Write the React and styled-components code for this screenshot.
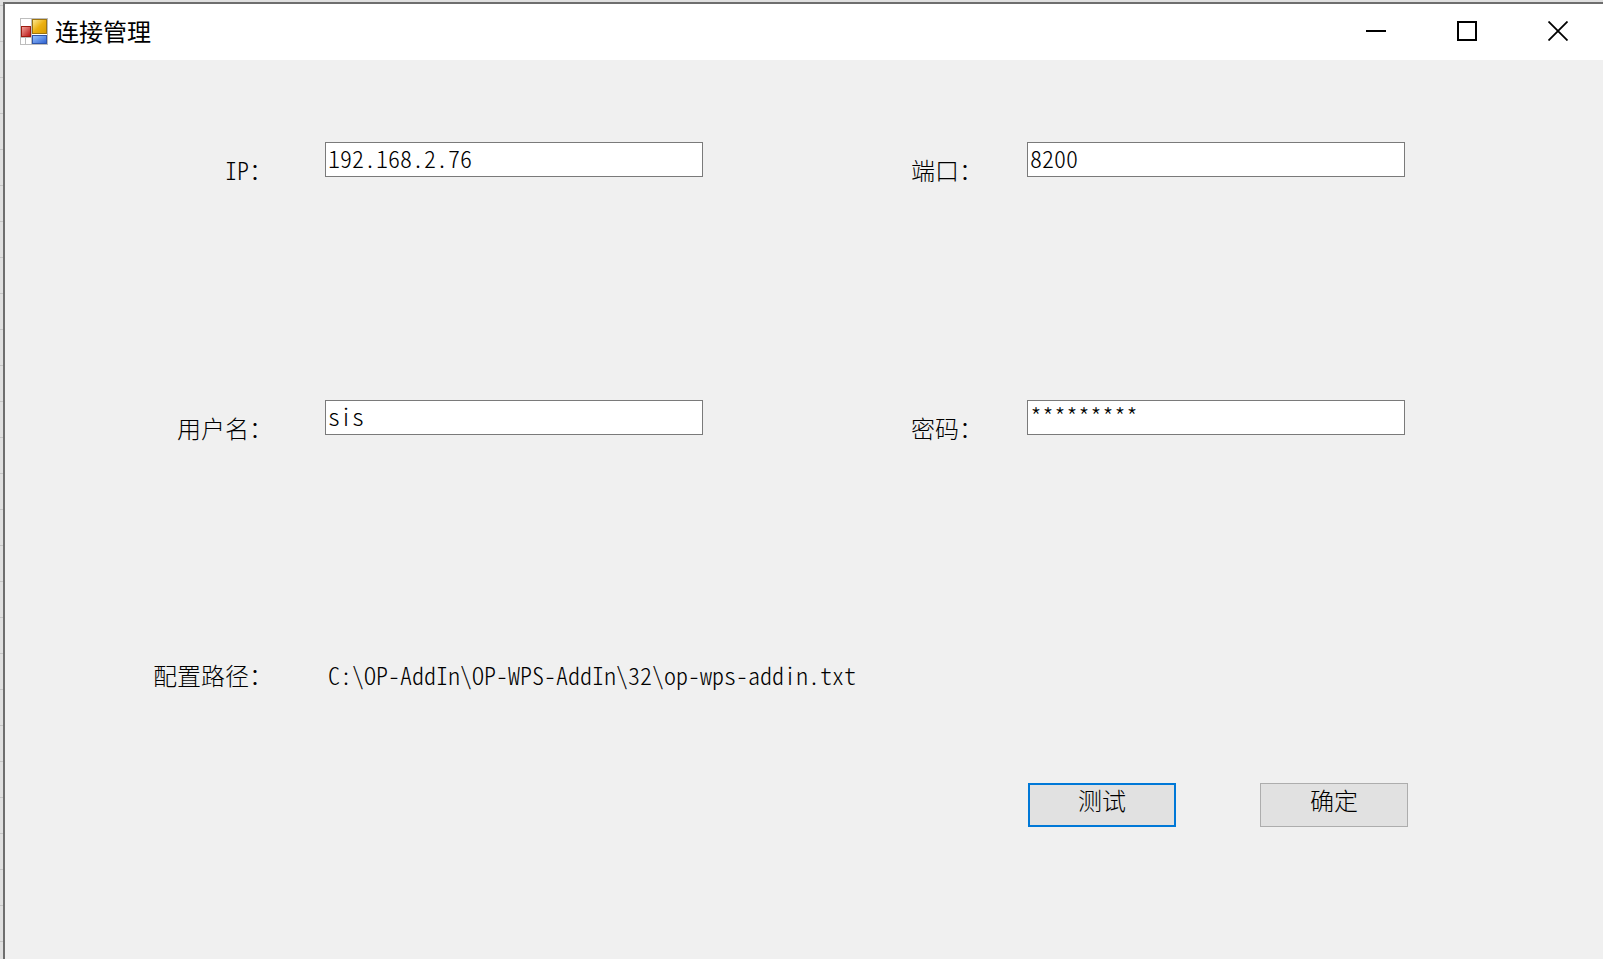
import React, { useState } from 'react';
import styled, { createGlobalStyle } from 'styled-components';

const GlobalStyle = createGlobalStyle`
  * {
    box-sizing: border-box;
  }

  html,
  body,
  #root {
    height: 100%;
  }

  body {
    margin: 0;
    overflow: hidden;
    background-color: #e0e0e0;
    color: #000;
    font-family: 'Noto Sans CJK SC', sans-serif;
    font-weight: 300;
    font-size: 24px;
    line-height: 24px;
  }
`;

const Desktop = styled.div`
  display: flex;
  min-height: 100%;
  padding: 2px 0 0 3px;
  background-color: #e0e0e0;
  background-image: linear-gradient(to bottom, #c6c6c6 1px, transparent 1px);
  background-size: 100% 36px;
  background-position: 0 5px;
`;

const Window = styled.main`
  flex: 1;
  display: flex;
  flex-direction: column;
  border-top: 2px solid #6e6e6e;
  border-left: 2px solid #6e6e6e;
  background-color: #f0f0f0;
`;

const TitleBar = styled.header`
  display: flex;
  align-items: stretch;
  height: 56px;
  padding-left: 15px;
  background-color: #fff;
`;

const TitleGroup = styled.div`
  flex: 1;
  display: flex;
  align-items: center;
  gap: 7px;
  padding-bottom: 2px;
`;

const Title = styled.h1`
  margin: 0;
  font-size: 24px;
  font-weight: 400;
`;

const CaptionButton = styled.button`
  display: flex;
  align-items: center;
  justify-content: center;
  width: 91px;
  padding: 0 0 2px;
  border: none;
  background-color: transparent;

  &:hover {
    background-color: ${(props) => (props.$danger ? '#e81123' : '#e5e5e5')};
  }
`;

const Form = styled.form`
  flex: 1;
  padding-top: 82px;
`;

const Row = styled.div`
  display: grid;
  grid-template-columns: 320fr 378fr 324fr 378fr 198fr;
  align-items: start;
  min-height: ${(props) => (props.$short ? '125px' : '258px')};
`;

const Label = styled.label`
  justify-self: end;
  padding-top: ${(props) => (props.$flush ? '5px' : '16px')};
  padding-right: ${(props) => (props.$near ? '44px' : '52px')};
  white-space: nowrap;
`;

const Latin = styled.span`
  font-feature-settings: 'hwid' 1;
`;

const TextBox = styled.input`
  width: 100%;
  height: 35px;
  padding: 0 2px 4px;
  border: 1px solid #7a7a7a;
  border-radius: 0;
  outline: none;
  background-color: #fff;
  color: #000;
  font-family: inherit;
  font-weight: inherit;
  font-size: 24px;
  font-feature-settings: 'hwid' 1;
`;

const Path = styled.output`
  grid-column: 2 / -1;
  padding: 5px 0 0 3px;
  font-feature-settings: 'hwid' 1;
`;

const Actions = styled.div`
  grid-column: 4 / -1;
  display: flex;
  gap: 84px;
  padding-left: 1px;
`;

const Button = styled.button`
  width: 148px;
  height: 44px;
  padding: 0 0 10px;
  border: ${(props) => (props.$primary ? '2px solid #0078d7' : '1px solid #adadad')};
  background-color: #e1e1e1;
  color: #000;
  font-family: inherit;
  font-weight: inherit;
  font-size: 24px;
  line-height: 24px;
`;

const AppIcon = () => (
  <svg width="28" height="27" viewBox="0 0 28 27" aria-hidden="true">
    <defs>
      <linearGradient id="yellow" x1="0" y1="0" x2="1" y2="1">
        <stop offset="0" stopColor="#fdeb9a" />
        <stop offset="0.5" stopColor="#ecb010" />
        <stop offset="1" stopColor="#d79a00" />
      </linearGradient>
      <linearGradient id="red" x1="0" y1="0" x2="1" y2="1">
        <stop offset="0" stopColor="#f3a8a0" />
        <stop offset="1" stopColor="#b80f0f" />
      </linearGradient>
      <linearGradient id="blue" x1="0" y1="0" x2="1" y2="1">
        <stop offset="0" stopColor="#9cc6ff" />
        <stop offset="1" stopColor="#2b5fd0" />
      </linearGradient>
    </defs>
    <rect x="0.5" y="0.5" width="27" height="26" fill="#fff" stroke="#bdbdbd" />
    <path d="M11.5 0v27M5.5 19v8M0 19.5h12" stroke="#bdbdbd" fill="none" />
    <rect x="12.5" y="1.5" width="14" height="14" fill="url(#yellow)" stroke="#9c7410" />
    <rect x="1.5" y="8.5" width="9" height="10" fill="url(#red)" stroke="#9c1c10" />
    <rect x="12.5" y="17.5" width="14" height="8" fill="url(#blue)" stroke="#2f55a8" />
  </svg>
);

const App = () => {
  const [form, setForm] = useState({
    ip: '192.168.2.76',
    port: '8200',
    user: 'sis',
    password: '*********',
  });

  const handleChange = (e) => {
    setForm({ ...form, [e.target.name]: e.target.value });
  };

  const handleSubmit = (e) => {
    e.preventDefault();
  };

  return (
    <>
      <GlobalStyle />
      <Desktop>
        <Window>
          <TitleBar>
            <TitleGroup>
              <AppIcon />
              <Title>连接管理</Title>
            </TitleGroup>
            <CaptionButton type="button" aria-label="最小化">
              <svg width="20" height="20" viewBox="0 0 20 20">
                <path d="M0 10h20" stroke="#000" strokeWidth="2" />
              </svg>
            </CaptionButton>
            <CaptionButton type="button" aria-label="最大化">
              <svg width="20" height="20" viewBox="0 0 20 20">
                <rect x="1" y="1" width="18" height="18" fill="none" stroke="#000" strokeWidth="2" />
              </svg>
            </CaptionButton>
            <CaptionButton type="button" aria-label="关闭" $danger>
              <svg width="20" height="20" viewBox="0 0 20 20">
                <path d="M0.5 0.5l19 19M19.5 0.5l-19 19" stroke="#000" strokeWidth="1.8" />
              </svg>
            </CaptionButton>
          </TitleBar>

          <Form onSubmit={handleSubmit}>
            <Row>
              <Label htmlFor="ip"><Latin>IP</Latin>：</Label>
              <TextBox id="ip" name="ip" value={form.ip} onChange={handleChange} />
              <Label htmlFor="port" $near>端口：</Label>
              <TextBox id="port" name="port" value={form.port} onChange={handleChange} />
            </Row>
            <Row>
              <Label htmlFor="user">用户名：</Label>
              <TextBox id="user" name="user" value={form.user} onChange={handleChange} />
              <Label htmlFor="password" $near>密码：</Label>
              <TextBox id="password" name="password" value={form.password} onChange={handleChange} />
            </Row>
            <Row $short>
              <Label htmlFor="path" $flush>配置路径：</Label>
              <Path id="path">C:\OP-AddIn\OP-WPS-AddIn\32\op-wps-addin.txt</Path>
            </Row>
            <Row $short>
              <Actions>
                <Button type="button" $primary>测试</Button>
                <Button type="submit">确定</Button>
              </Actions>
            </Row>
          </Form>
        </Window>
      </Desktop>
    </>
  );
};

export default App;
